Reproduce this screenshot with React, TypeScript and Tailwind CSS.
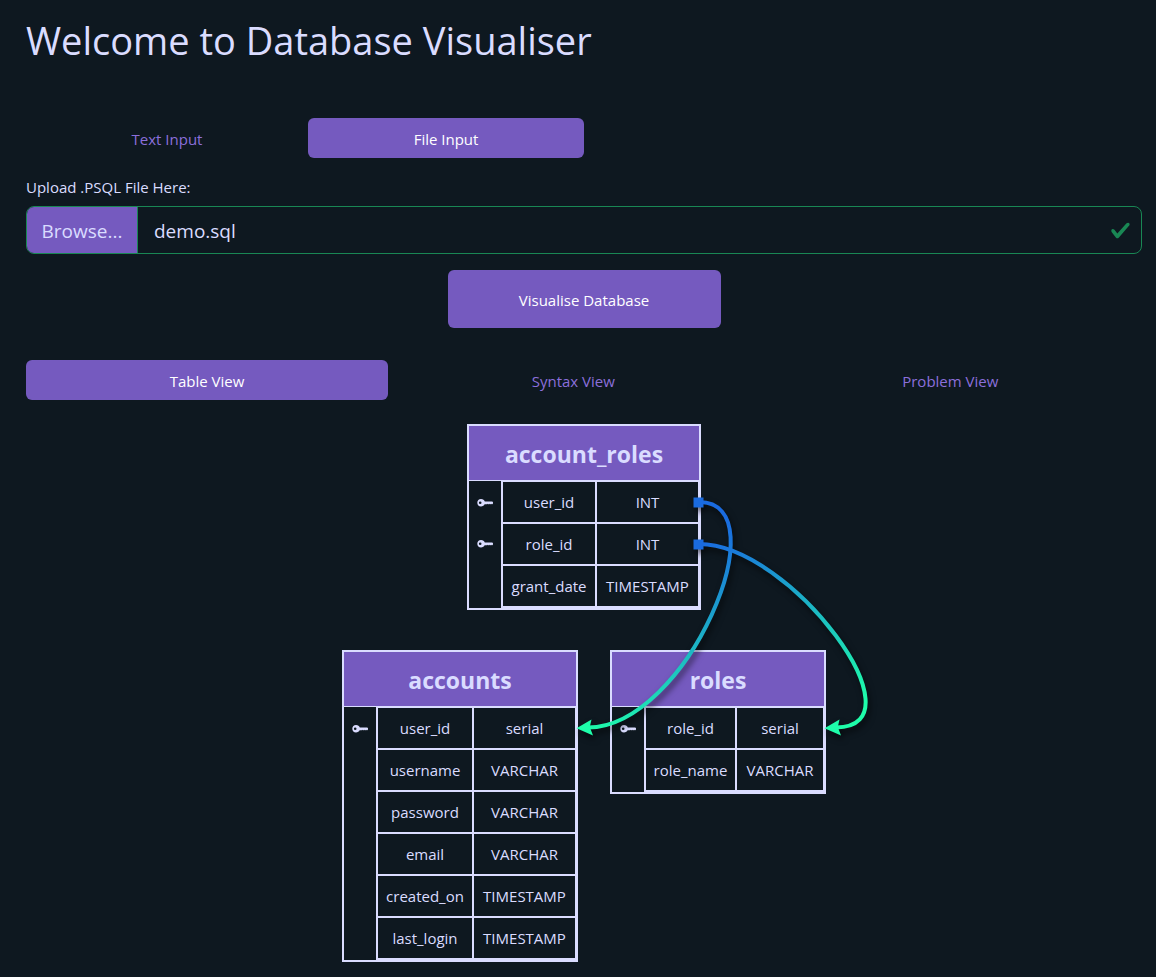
import { useState } from "react";

type Column = { name: string; type: string; key?: boolean };

type TableProps = {
  title: string;
  columns: Column[];
  nameWidth: string;
  typeWidth: string;
};

const accountRoles: Column[] = [
  { name: "user_id", type: "INT", key: true },
  { name: "role_id", type: "INT", key: true },
  { name: "grant_date", type: "TIMESTAMP" },
];

const accounts: Column[] = [
  { name: "user_id", type: "serial", key: true },
  { name: "username", type: "VARCHAR" },
  { name: "password", type: "VARCHAR" },
  { name: "email", type: "VARCHAR" },
  { name: "created_on", type: "TIMESTAMP" },
  { name: "last_login", type: "TIMESTAMP" },
];

const roles: Column[] = [
  { name: "role_id", type: "serial", key: true },
  { name: "role_name", type: "VARCHAR" },
];

function KeyIcon() {
  return (
    <svg className="mx-auto size-4" viewBox="0 0 16 16" fill="currentColor" role="img" aria-label="Primary key">
      <path
        fillRule="evenodd"
        d="M4 4C6 4 7.300 5 7.800 6.600H15.300L16 7.300V8.500L15.300 9.300H14.600L14.100 8.700L13.600 9.300H12.700L12.200 8.700L11.700 9.300H10.800L10.300 8.700L9.800 9.300H7.600C7 10.600 5.700 11.400 4 11.400C1.800 11.400 .3 9.800 .3 7.700S1.800 4 4 4ZM3.200 6.400A1.300 1.300 0 1 0 3.200 9A1.300 1.300 0 1 0 3.200 6.400Z"
      />
    </svg>
  );
}

function SchemaTable({ title, columns, nameWidth, typeWidth }: TableProps) {
  return (
    <div className="border-2 border-[#dadcff]">
      <table className="table-fixed border-separate border-spacing-0 text-center">
        <colgroup>
          <col className="w-8" />
          <col className={nameWidth} />
          <col className={typeWidth} />
        </colgroup>
        <thead>
          <tr>
            <th colSpan={3} className="h-[54px] bg-[#755abf] p-0 pt-0.5 text-[23px] leading-8 font-bold">
              {title}
            </th>
          </tr>
        </thead>
        <tbody>
          {columns.map((column, i) => {
            const last = i === columns.length - 1;
            const height = last ? "h-11 border-b-2" : "h-[42px]";
            return (
              <tr key={column.name}>
                <td className={`border-[#dadcff] p-0 pt-0.5 ${i === 0 ? "border-t" : ""}`}>
                  {column.key && <KeyIcon />}
                </td>
                <td className={`border-t-2 border-l-2 border-[#dadcff] p-0 ${height}`}>{column.name}</td>
                <td className={`border-t-2 border-r border-l-2 border-[#dadcff] p-0 ${height}`}>{column.type}</td>
              </tr>
            );
          })}
        </tbody>
      </table>
    </div>
  );
}

function Relations() {
  return (
    <svg
      className="pointer-events-none absolute top-0 left-0 overflow-visible drop-shadow-[2px_4px_3px_rgba(0,0,0,0.6)]"
      width="484"
      height="538"
      viewBox="0 0 484 538"
      fill="none"
      aria-hidden="true"
    >
      <defs>
        <linearGradient id="to-accounts" gradientUnits="userSpaceOnUse" x1="359" y1="78" x2="236" y2="304">
          <stop offset="0" stopColor="#1a6be0" />
          <stop offset="1" stopColor="#1efdaa" />
        </linearGradient>
        <linearGradient id="to-roles" gradientUnits="userSpaceOnUse" x1="359" y1="120" x2="484" y2="304">
          <stop offset="0" stopColor="#1a6be0" />
          <stop offset="1" stopColor="#1efdaa" />
        </linearGradient>
      </defs>
      <path d="M357 78C440 78 345 303 246 303.500" stroke="url(#to-accounts)" strokeWidth="4" />
      <path d="M357 120C449 120 584 303 494 303.500" stroke="url(#to-roles)" strokeWidth="4" />
      <path d="M351.500 73.500h10v10h-10zM351.500 115.500h10v10h-10z" fill="#1a6be0" />
      <path d="M234.500 304.300L249.500 295.500L247.800 303L251 311.500Z" fill="#1efdaa" />
      <path d="M482.500 304.300L497.500 295.500L495.800 303L499 311.500Z" fill="#1efdaa" />
    </svg>
  );
}

type TabsProps = { labels: string[]; initial: number };

function Tabs({ labels, initial }: TabsProps) {
  const [active, setActive] = useState(initial);
  return (
    <div role="tablist" className="flex">
      {labels.map((label, i) => (
        <button
          key={label}
          type="button"
          role="tab"
          aria-selected={i === active}
          onClick={() => setActive(i)}
          className={`h-10 flex-auto rounded-md px-4 pt-0.5 ${i === active ? "bg-[#755abf] text-white" : "text-[#8b6fdb]"}`}
        >
          {label}
        </button>
      ))}
    </div>
  );
}

export default function App() {
  const [fileName, setFileName] = useState("demo.sql");
  return (
    <main className="flex min-h-screen flex-col bg-[#0e1820] pt-4 pr-3.5 pb-4 pl-[26px] font-['Open_Sans','Noto_Sans',sans-serif] text-[15px] leading-6 text-[#dadcff]">
      <h1 className="text-[38px] leading-[48px]">Welcome to Database Visualiser</h1>

      <div className="mt-[54px] w-1/2">
        <Tabs labels={["Text Input", "File Input"]} initial={1} />
      </div>

      <label htmlFor="sql-file" className="mt-[17px] self-start">
        Upload .PSQL File Here:
      </label>
      <input
        id="sql-file"
        type="file"
        accept=".sql,.psql"
        className="sr-only"
        onChange={(e) => setFileName(e.target.files?.[0]?.name ?? fileName)}
      />
      <label
        htmlFor="sql-file"
        className="mt-[7px] flex h-12 cursor-pointer items-stretch overflow-hidden rounded-lg border border-[#198754] text-[19px]"
      >
        <span className="flex w-[111px] items-center justify-center border-r border-[#198754] bg-[#755abf] pt-0.5">
          Browse...
        </span>
        <span className="flex flex-1 items-center px-4 pt-0.5">{fileName}</span>
        <svg className="mr-2.5 size-[21px] self-center" viewBox="0 0 8 8" fill="#198754" aria-hidden="true">
          <path d="M2.3 6.73.6 4.53c-.4-1.04.46-1.4 1.1-.8l1.1 1.4 3.4-3.8c.6-.63 1.6-.27 1.2.7l-4 4.6c-.43.5-.8.4-1.1.1z" />
        </svg>
      </label>

      <button type="button" className="mt-4 h-[58px] w-[273px] self-center rounded-md bg-[#755abf] pt-0.5 text-white">
        Visualise Database
      </button>

      <div className="mt-8">
        <Tabs labels={["Table View", "Syntax View", "Problem View"]} initial={0} />
      </div>

      <section className="relative mt-6 flex flex-col items-center gap-10 self-center" aria-label="Table diagram">
        <SchemaTable title="account_roles" columns={accountRoles} nameWidth="w-[94px]" typeWidth="w-[104px]" />
        <div className="flex items-start gap-8">
          <SchemaTable title="accounts" columns={accounts} nameWidth="w-24" typeWidth="w-[104px]" />
          <SchemaTable title="roles" columns={roles} nameWidth="w-[91px]" typeWidth="w-[89px]" />
        </div>
        <Relations />
      </section>
    </main>
  );
}
